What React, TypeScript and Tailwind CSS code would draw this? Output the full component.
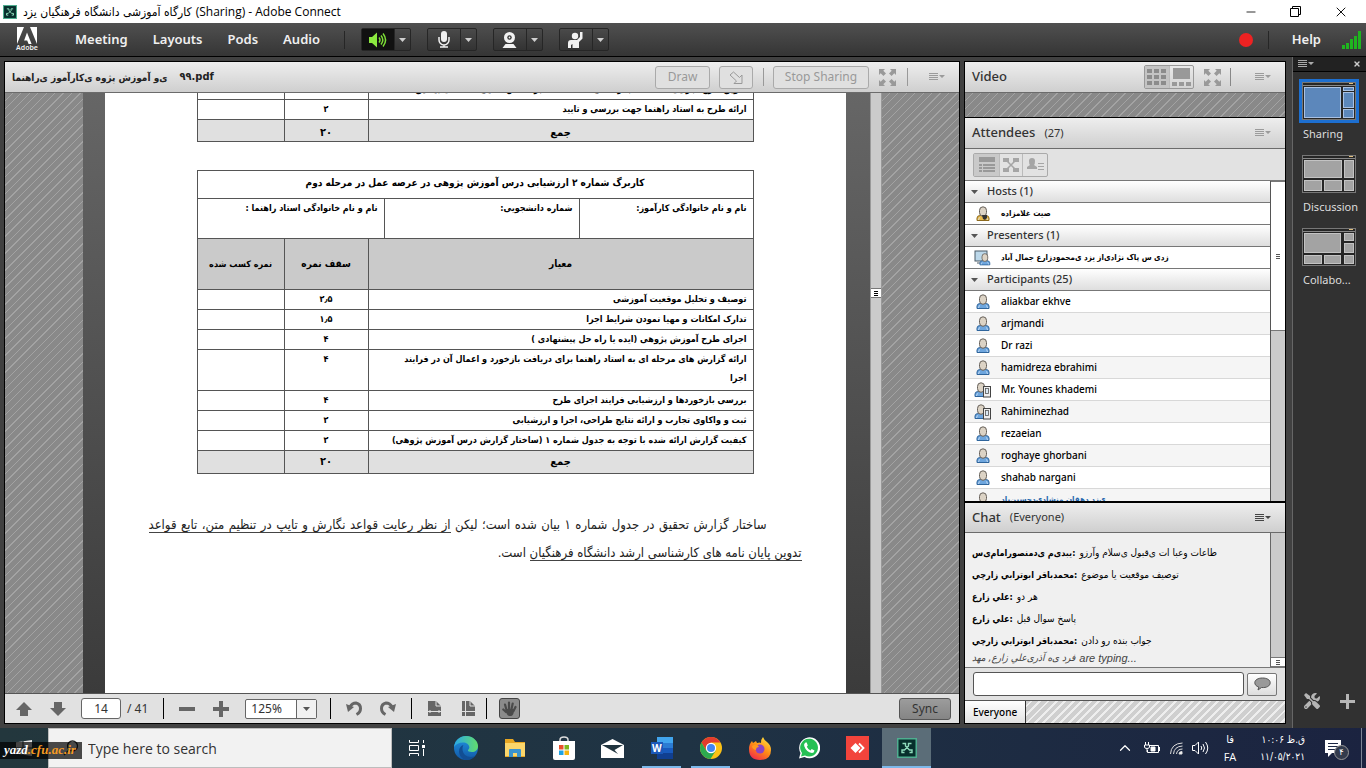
import React, { useState } from 'react';
import { ChevronUp, Minus, X } from 'lucide-react';
import { FaTools } from 'react-icons/fa';

const FA = "font-['DejaVu_Sans_Condensed','DejaVu_Sans',sans-serif]";
const HATCH = 'bg-[repeating-linear-gradient(135deg,#898989_0px,#898989_5px,#a3a3a3_5px,#a3a3a3_6px)]';
const HATCH_LIGHT = 'bg-[repeating-linear-gradient(135deg,#cfcfcf_0px,#cfcfcf_4px,#eeeeee_4px,#eeeeee_6px)]';
const POD_HEAD = 'bg-linear-to-b from-[#eeeeee] to-[#cfcfcf] border-b border-[#6b6b6b]';

const participants = [
    { name: 'aliakbar ekhve' },
    { name: 'arjmandi' },
    { name: 'Dr razi' },
    { name: 'hamidreza ebrahimi' },
    { name: 'Mr. Younes khademi', mobile: true },
    { name: 'Rahiminezhad', mobile: true },
    { name: 'rezaeian' },
    { name: 'roghaye ghorbani' },
    { name: 'shahab nargani' },
];

const messages = [
    { from: 'یبدی‌م ی‌دمنصورامام‌ی‌س', text: 'طاعات وعبا ات ی‌قبول ی‌سلام وآرزو' },
    { from: 'محمدباقر ابوترابي زارچي', text: 'توصیف موقعیت یا موضوع' },
    { from: 'علي زارع', text: 'هر دو' },
    { from: 'علي زارع', text: 'پاسخ سوال قبل' },
    { from: 'محمدباقر ابوترابي زارچي', text: 'جواب بنده رو دادن' },
];

const criteria = [
    { text: 'توصیف و تحلیل موقعیت آموزشی', score: '۲٫۵' },
    { text: 'تدارک امکانات و مهیا نمودن شرایط اجرا', score: '۱٫۵' },
    { text: 'اجرای طرح آموزش پژوهی (ایده یا راه حل پیشنهادی )', score: '۴' },
    { text: 'ارائه گزارش های مرحله ای به استاد راهنما برای دریافت بازخورد و اعمال آن در فرایند', rest: 'اجرا', score: '۴' },
    { text: 'بررسی بازخوردها و ارزشیابی فرایند اجرای طرح', score: '۴' },
    { text: 'ثبت و واکاوی تجارب و ارائه نتایج طراحی، اجرا و ارزشیابی', score: '۲' },
    { text: 'کیفیت گزارش ارائه شده با توجه به جدول شماره ۱ (ساختار گزارش درس آموزش پژوهی)', score: '۲' },
];

/* ---------- icons ---------- */

const ConnectLogo = ({ className }: { className?: string }) => (
    <svg viewBox="0 0 20 20" className={className}>
        <rect x="0.75" y="0.75" width="18.5" height="18.5" fill="#072f2c" stroke="#4fae90" strokeWidth="1.5" />
        <path d="M5.500 5.500h3v2.500l4 4h2.500v2.500h-2.500M14.500 5.500h-3v2.500l-4 4H5v2.500h2.500" fill="none" stroke="#8fdcbc" strokeWidth="1.4" />
    </svg>
);

const AdobeLogo = () => (
    <svg width="20" height="17" viewBox="0 0 20 17">
        <path fill="#fff" d="M0 0h7L0 17zM13 0h7v17zM10 5.5 14.6 17h-3l-1.4-3.6H7.1z" />
    </svg>
);

const Caret = ({ className = 'fill-[#cfcfcf]' }: { className?: string }) => (
    <svg width="7" height="4" viewBox="0 0 7 4" className={className}><path d="M0 0h7L3.500 4z" /></svg>
);

const MenuLines = ({ className = 'text-[#9b9b9b]' }: { className?: string }) => (
    <svg width="16" height="8" viewBox="0 0 16 8" className={className} fill="currentColor">
        <path d="M0 0h9v1H0zM0 2h9v1H0zM0 4h9v1H0zM0 6h9v1H0zM10 2h6l-3 3z" />
    </svg>
);

const Expand = () => (
    <svg width="17" height="17" viewBox="0 0 17 17" fill="#999">
        <path d="M0 0h6L4.300 1.700 7 4.400 4.400 7 1.700 4.300 0 6zM17 0v6l-1.700-1.700L12.600 7 10 4.400l2.700-2.700L11 0zM0 17v-6l1.700 1.700L4.400 10 7 12.600 4.300 15.300 6 17zM17 17h-6l1.700-1.700L10 12.600 12.600 10l2.700 2.700L17 11z" />
    </svg>
);

const SpeakerIcon = () => (
    <svg width="19" height="16" viewBox="0 0 19 16" fill="none" stroke="#7ddf36" strokeWidth="1.5">
        <path d="M1 5h3l5-4.500v15L4 11H1z" fill="#8be83f" stroke="none" />
        <path d="M11 5.500q2 2.500 0 5M13 3.500q3.600 4.500 0 9M15 1.500q5.200 6.500 0 13" />
    </svg>
);

const MicIcon = () => (
    <svg width="12" height="17" viewBox="0 0 12 17" fill="#f2f2f2">
        <rect x="3" y="0" width="6" height="11" rx="3" />
        <path d="M1 6v3a5 5 0 0 0 10 0V6M6 14v2M2 16h8" fill="none" stroke="#f2f2f2" strokeWidth="1.500" />
    </svg>
);

const WebcamIcon = () => (
    <svg width="15" height="16" viewBox="0 0 15 16">
        <circle cx="7.5" cy="5.500" r="5.500" fill="#f2f2f2" />
        <circle cx="7.5" cy="5.500" r="2.200" fill="#333" />
        <circle cx="7.500" cy="5.500" r="0.900" fill="#f2f2f2" />
        <path d="M3.500 12h8l3 4H.500z" fill="#f2f2f2" />
    </svg>
);

const HandRaiseIcon = () => (
    <svg width="15" height="16" viewBox="0 0 15 16" fill="#f2f2f2">
        <circle cx="7" cy="4" r="3.200" />
        <path d="M12 0h2.500v6.500L11 10v6H4.500v-4l-1.500 1v3H0v-5q0-3 3-3h6l3-3z" />
    </svg>
);

const PersonIcon = ({ kind = 'user' }: { kind?: 'user' | 'mobile' | 'host' | 'presenter' }) => {
    const shirt = kind === 'host' ? '#eabb4e' : '#6ea6de';
    const edge = kind === 'host' ? '#8d6a1e' : '#2f659c';
    return (
        <svg width="18" height="16" viewBox="0 0 18 16">
            {kind === 'presenter' && (
                <>
                    <rect x="1" y="1" width="12" height="10" fill="#bcd8ea" stroke="#4b5a66" />
                    <path d="M3 13h7" stroke="#4b5a66" />
                </>
            )}
            <g transform={kind === 'mobile' ? 'translate(-2 0)' : kind === 'presenter' ? 'translate(3.500 3) scale(.82)' : ''}>
                <path d="M3 14.500v-2.500q0-2.500 3.500-2.500h5q3.500 0 3.500 2.500v2.500z" fill={shirt} stroke={edge} />
                <path d="M4.500 14q0-2 1.500-2.500M13.500 14q0-2-1.500-2.500" fill="none" stroke="#d3e5f6" strokeWidth=".8" />
                <path d="M5.500 4.500q0-3.700 3.500-3.700t3.500 3.700v2q0 3.800-3.500 3.800T5.500 6.500z" fill="#dcd3c5" stroke="#66605a" />
                {kind === 'host' && <path d="M8 9h5v3l-2 2-2-1z" fill="#333" />}
            </g>
            {kind === 'mobile' && (
                <>
                    <rect x="9.500" y="4.500" width="7" height="10.500" fill="#eee" stroke="#444" />
                    <rect x="11.500" y="6.500" width="3" height="5" fill="#dceaf5" stroke="#555" strokeWidth=".8" />
                </>
            )}
        </svg>
    );
};

const Thumb = ({ boxes, active }: { boxes: number[][]; active?: boolean }) => (
    <svg width="60" height="44" viewBox="0 0 60 44">
        <rect x="3.500" y="3.500" width="53" height="37" fill="#262626" stroke="#777" />
        <path d="M4 6.500h52" stroke="#888" />
        <path d="M50 4.500h4" stroke="#e0c080" />
        {boxes.map(([x, y, w, h], i) => (
            <rect key={i} x={x + 0.5} y={y + 0.5} width={w - 1} height={h - 1} fill={active ? '#5c87bb' : '#a3a3a3'} stroke={active ? '#a9c1e4' : '#c3c3c3'} />
        ))}
        {active && <rect x="1.500" y="1.500" width="57" height="41" fill="none" stroke="#1d6fd0" strokeWidth="3" />}
    </svg>
);

const layouts = [
    { label: 'Sharing', active: true, boxes: [[5, 8, 37, 31], [44, 8, 11, 4], [44, 13, 11, 16], [44, 30, 11, 9]] },
    { label: 'Discussion', boxes: [[5, 8, 38, 18], [45, 8, 10, 18], [5, 28, 18, 11], [25, 28, 18, 11], [45, 28, 10, 11]] },
    { label: 'Collabo...', boxes: [[5, 8, 37, 20], [45, 8, 10, 8], [45, 18, 10, 10], [5, 30, 18, 9], [25, 30, 17, 9], [45, 30, 10, 9]] },
];

/* ---------- top bars ---------- */

const TitleBar = () => (
    <header className="flex h-[23px] shrink-0 items-center bg-white">
        <ConnectLogo className="ml-[3px] size-[14px]" />
        <h1 className={`ml-[6px] flex gap-1 text-[12px] text-black ${FA}`}>
            <bdi>کارگاه آموزشی دانشگاه فرهنگیان یزد</bdi>
            <span className="font-['Open_Sans',sans-serif]">(Sharing) - Adobe Connect</span>
        </h1>
        <div className="mr-[3px] ml-auto flex items-center text-black">
            <button aria-label="Minimize" className="flex w-[45px] justify-center"><Minus size={14} strokeWidth={1.4} /></button>
            <button aria-label="Restore" className="flex w-[45px] justify-center">
                <svg width="11" height="11" viewBox="0 0 11 11" fill="none" stroke="#000"><path d="M2.500 2.500v-2h8v8h-2M.500 2.500h8v8h-8z" /></svg>
            </button>
            <button aria-label="Close" className="flex w-[45px] justify-center"><X size={16} strokeWidth={1.4} /></button>
        </div>
    </header>
);

const SplitButton = ({ label, icon, on }: { label: string; icon: React.ReactNode; on?: boolean }) => (
    <div className="flex h-[23px] rounded-[2px] border border-[#262626] bg-linear-to-b from-[#4a4a4a] to-[#333]">
        <button aria-label={label} className={`flex w-[32px] items-center justify-center ${on ? 'bg-[#111]' : ''}`}>{icon}</button>
        <button aria-label={`${label} options`} className="flex w-4 items-center justify-center border-l border-[#262626]"><Caret /></button>
    </div>
);

const MenuBar = () => (
    <nav className="flex h-[34px] shrink-0 items-center border-b border-black bg-linear-to-b from-[#505050] to-[#353535] font-['Noto_Sans',sans-serif] text-[13px] font-semibold text-[#f0f0f0]">
        <div className="ml-[17px] flex w-5 flex-col items-center">
            <AdobeLogo />
            <span className="text-[7px] leading-[8px]">Adobe</span>
        </div>
        <div className="ml-[38px] flex gap-[25px]">
            {['Meeting', 'Layouts', 'Pods', 'Audio'].map(m => <button key={m}>{m}</button>)}
        </div>
        <div className="ml-6 h-[18px] w-px bg-[#262626]" />
        <div className="ml-4 flex gap-4">
            <SplitButton label="Speakers" icon={<SpeakerIcon />} on />
            <SplitButton label="Microphone" icon={<MicIcon />} />
            <SplitButton label="Webcam" icon={<WebcamIcon />} />
            <SplitButton label="Raise hand" icon={<HandRaiseIcon />} />
        </div>
        <div className="ml-auto flex items-center pr-[4px]">
            <span className="size-[14px] rounded-full bg-[#ee2222]" />
            <div className="ml-[15px] h-[18px] w-px bg-[#262626]" />
            <button className="ml-[23px]">Help</button>
            <svg width="20" height="18" viewBox="0 0 20 18" fill="#1fb51f" className="ml-[21px]">
                <path d="M0 14h3v4H0zM4 12h3v6H4zM8 8h3v10H8zM12 5h3v13h-3zM16 0h3v18h-3z" />
            </svg>
        </div>
    </nav>
);

/* ---------- shared document ---------- */

const line = 'border border-[#555]';

const SharedDocument = () => (
    <article dir="rtl" className={`h-full overflow-hidden bg-white px-11 text-black ${FA}`}>
        <div className="px-12">
            <table className="-mt-[14px] w-full table-fixed border-collapse text-[9px] font-bold">
                <colgroup><col /><col className="w-[84px]" /><col className="w-[87px]" /></colgroup>
                <tbody>
                    <tr className="h-5">
                        <td className={`${line} px-[6px]`}>تدوین طرح اجرایی (متناسب با راه حل انتخاب شده بر اساس تحلیل داده های پیشین)</td>
                        <td className={line} /><td className={line} />
                    </tr>
                    <tr className="h-5">
                        <td className={`${line} px-[6px]`}>ارائه طرح به استاد راهنما جهت بررسی و تایید</td>
                        <td className={`${line} text-center`}>۲</td><td className={line} />
                    </tr>
                    <tr className="h-[22px] bg-[#e0e0e0] text-[11px] leading-[16px]">
                        <td className={`${line} pt-1 text-center`}>جمع</td>
                        <td className={`${line} pt-1 text-center`}>۲۰</td><td className={line} />
                    </tr>
                </tbody>
            </table>
            <table className="mt-7 w-full table-fixed border-collapse text-[9px] font-bold leading-[18px]">
                <colgroup>
                    <col className="w-[174px]" /><col /><col className="w-4" /><col className="w-[84px]" /><col className="w-[87px]" />
                </colgroup>
                <thead>
                    <tr className="h-7">
                        <th colSpan={5} className={`${line} pb-1 text-[10px]`}>کاربرگ شماره ۲ ارزشیابی درس آموزش پژوهی در عرصه عمل در مرحله دوم</th>
                    </tr>
                    <tr className="h-10 align-top">
                        <td className={`${line} px-[6px]`}>نام و نام خانوادگی کارآموز:</td>
                        <td className={`${line} px-[6px]`}>شماره دانشجویی:</td>
                        <td colSpan={3} className={`${line} px-[6px]`}>نام و نام خانوادگی استاد راهنما :</td>
                    </tr>
                    <tr className="h-[51px] bg-[#cacaca] text-[10px]">
                        <th colSpan={3} className={line}>معیار</th>
                        <th className={line}>سقف نمره</th>
                        <th className={`${line} text-[9px]`}>نمره کسب شده</th>
                    </tr>
                </thead>
                <tbody>
                    {criteria.map(c => (
                        <tr key={c.text} className={`align-top leading-[19px] ${c.rest ? 'h-[41px]' : 'h-5'}`}>
                            <td colSpan={3} className={`${line} px-[6px]`}>{c.text}{c.rest && <><br />{c.rest}</>}</td>
                            <td className={`${line} text-center`}>{c.score}</td>
                            <td className={line} />
                        </tr>
                    ))}
                    <tr className="h-[23px] bg-[#e0e0e0] text-[11px]">
                        <td colSpan={3} className={`${line} text-center`}>جمع</td>
                        <td className={`${line} text-center`}>۲۰</td>
                        <td className={line} />
                    </tr>
                </tbody>
            </table>
        </div>
        <div className="mt-[37px] text-[13px] leading-7 text-[#222]">
            <p className="pr-[35px] [text-align-last:justify]">
                ساختار گزارش تحقیق در جدول شماره ۱ بیان شده است؛ لیکن <span className="border-b border-[#444]">از نظر رعایت قواعد نگارش و تایپ در تنظیم متن، تابع قواعد</span>
            </p>
            <p><span className="border-b border-[#444]">تدوین پایان نامه های کارشناسی ارشد دانشگاه فرهنگیان</span> است.</p>
        </div>
    </article>
);

const ToolRule = () => <div className="h-[21px] w-px bg-black" />;

const PdfToolbar = () => {
    const [page, setPage] = useState('14');
    return (
        <div className="flex h-[30px] shrink-0 items-center border-t border-[#555] bg-[#e1e1e1] font-['Noto_Sans',sans-serif] text-[12px] text-[#333]">
            <button aria-label="Previous page" className="ml-[11px]"><svg width="16" height="14" fill="#666"><path d="M8 0l8 8h-4v6H4V8H0z" /></svg></button>
            <button aria-label="Next page" className="ml-[18px]"><svg width="16" height="14" fill="#666"><path d="M8 14l8-8h-4V0H4v6H0z" /></svg></button>
            <input aria-label="Page" value={page} onChange={e => setPage(e.target.value)} className="ml-[15px] h-[21px] w-10 rounded-[3px] border border-[#666] bg-white text-center" />
            <span className="ml-[6px]">/ 41</span>
            <div className="ml-[15px] flex items-center gap-[15px]">
                <ToolRule />
                <button aria-label="Zoom out"><svg width="16" height="16" fill="#666"><path d="M0 6h16v4H0z" /></svg></button>
                <button aria-label="Zoom in" className="ml-[3px]"><svg width="16" height="16" fill="#666"><path d="M6 0h4v6h6v4h-6v6H6v-6H0V6h6z" /></svg></button>
            </div>
            <div className="relative ml-4 flex h-5 w-[72px] rounded-[2px] border border-[#666] bg-white">
                <select aria-label="Zoom" className="w-full appearance-none pl-[5px] text-[12px] leading-[18px]"><option>125%</option></select>
                <span className="pointer-events-none absolute inset-y-0 right-0 flex w-5 items-center justify-center border-l border-[#666] bg-[#f1f1f1]"><Caret className="fill-[#555]" /></span>
            </div>
            <div className="ml-[13px] flex items-center gap-[15px]">
                <ToolRule />
                <button aria-label="Rotate left"><svg width="16" height="15" viewBox="0 0 16 15"><path d="M4 6q2-4 6-4 4.500 1 4.500 5.500 0 4-4 6" fill="none" stroke="#666" strokeWidth="3" /><path d="M0 3l2 8 6-5z" fill="#666" /></svg></button>
                <button aria-label="Rotate right" className="ml-[3px]"><svg width="16" height="15" viewBox="0 0 16 15"><path d="M12 6q-2-4-6-4-4.500 1-4.500 5.500 0 4 4 6" fill="none" stroke="#666" strokeWidth="3" /><path d="M16 3l-2 8-6-5z" fill="#666" /></svg></button>
            </div>
            <div className="ml-[15px] flex items-center">
                <ToolRule />
                <button aria-label="Fit width" className="ml-4"><svg width="13" height="15" viewBox="0 0 13 15"><path d="M0 0h8l5 5v10H0z" fill="#666" /><path d="M8 0v5h5M0 10.500h13M2 9v3M11 9v3" stroke="#e1e1e1" fill="none" /></svg></button>
                <button aria-label="Fit page" className="mr-[11px] ml-[21px]"><svg width="13" height="15" viewBox="0 0 13 15"><path d="M0 0h8l5 5v10H0z" fill="#666" /><path d="M8 0v5h5M0 10.500h13M3.500 0v15" stroke="#e1e1e1" fill="none" /></svg></button>
                <ToolRule />
            </div>
            <button aria-label="Pan" className="ml-[12px] flex h-[21px] w-[21px] items-center justify-center rounded-[3px] border border-[#444] bg-[#8b8b8b]">
                <svg width="15" height="16" viewBox="0 0 15 16" fill="none" stroke="#4a4a4a" strokeWidth="2.200" strokeLinecap="round">
                    <path d="M4.500 9 3 3.500M7 8V1.500M9.500 8l1.200-5.500M11.500 10l2-4M4 11 1.300 8.500" /><path d="M4 8h8q0 7-3 7H7q-3-1-3-7z" fill="#4a4a4a" stroke="none" />
                </svg>
            </button>
            <button className="ml-auto mr-2 h-[22px] w-[52px] rounded-[3px] border border-[#555] bg-linear-to-b from-[#9c9c9c] to-[#858585] text-[#333]">Sync</button>
        </div>
    );
};

const ghost = 'flex h-[23px] items-center justify-center rounded-[3px] border border-[#aaa] bg-[#e0e0e0] text-[#999]';

const SharePod = () => (
    <section className="flex min-w-0 flex-1 flex-col border border-black">
        <div className={`flex h-[31px] shrink-0 items-center font-['Noto_Sans',sans-serif] text-[12px] ${POD_HEAD}`}>
            <h2 className={`ml-[7px] flex items-center gap-3 text-[10px] font-semibold text-[#222] ${FA}`}>
                <bdi>ی‌و آموزش پژوه ی‌کارآموز ی‌راهنما</bdi>
                <span className="text-[11px]">۹۹.pdf</span>
            </h2>
            <div className="ml-auto flex items-center">
                <button className={`${ghost} w-[55px]`}>Draw</button>
                <button aria-label="Pointer" className={`${ghost} ml-[9px] w-[34px]`}>
                    <svg width="14" height="13" viewBox="0 0 14 13" fill="none" stroke="#999"><path d="M1 4 4.500 1l6 5.500L13 4v8.500H5L7.500 10z" /></svg>
                </button>
                <div className="ml-[10px] h-[18px] w-px bg-[#999]" />
                <button className={`${ghost} ml-[9px] w-[96px]`}>Stop Sharing</button>
                <button aria-label="Full screen" className="ml-[10px]"><Expand /></button>
                <div className="ml-[11px] h-[18px] w-px bg-[#999]" />
                <button aria-label="Pod options" className="ml-[21px] mr-[14px]"><MenuLines /></button>
            </div>
        </div>
        <div className="flex min-h-0 flex-1">
            <div className={`flex-1 ${HATCH}`} />
            <div className="w-[787px] shrink-0 bg-linear-to-b from-[#666] to-[#3b3b3b] pl-[22px] pr-6">
                <SharedDocument />
            </div>
            <div className="flex w-3 shrink-0 flex-col border-x border-[#999] bg-[#cbcbcb] pt-[195px]">
                <div className="flex h-[10px] flex-col items-center justify-center gap-px border-y border-[#777] bg-white">
                    <i className="h-px w-1 bg-black" /><i className="h-px w-1 bg-black" /><i className="h-px w-1 bg-black" />
                </div>
            </div>
            <div className={`flex-1 ${HATCH}`} />
        </div>
        <PdfToolbar />
    </section>
);

/* ---------- right hand pods ---------- */

const GroupHead = ({ label }: { label: string }) => (
    <h3 className="flex h-[22px] items-center border-b border-[#777] bg-linear-to-b from-white to-[#dedede] pl-[6px] text-[11px] text-[#333]">
        <Caret className="fill-[#555]" />
        <span className="ml-[9px]">{label}</span>
    </h3>
);

const segment = 'flex h-[22px] items-center justify-center';

const AttendeePod = () => (
    <section className="flex min-h-0 flex-1 flex-col border-t border-black">
        <div className={`flex h-[31px] shrink-0 items-center pl-[7px] pr-[14px] ${POD_HEAD}`}>
            <h2 className="text-[13px] font-medium text-[#333]">Attendees</h2>
            <span className="ml-[9px] text-[11px] text-[#333]">(27)</span>
            <button aria-label="Attendee options" className="ml-auto"><MenuLines /></button>
        </div>
        <div className="flex h-8 shrink-0 items-center border-b border-[#777] bg-[#e2e2e2] pl-2">
            <div className="flex rounded-[2px] border border-[#aaa]">
                <button aria-label="List view" className={`${segment} w-[25px] bg-[#c9c9c9]`}><svg width="16" height="15" fill="#999"><path d="M0 0h16v5H0zM0 7h3v2H0zM4 7h12v2H4zM0 10h3v2H0zM4 10h12v2H4zM0 13h3v2H0zM4 13h12v2H4z" /></svg></button>
                <button aria-label="Breakout view" className={`${segment} w-6 border-x border-[#bbb]`}><svg width="16" height="14" fill="#a5a5a5"><path d="M0 0h6v4H0zM10 0h6v4h-6zM0 10h6v4H0zM10 10h6v4h-6z" /><path d="m4 3 8 8M12 3l-8 8" stroke="#a5a5a5" strokeWidth="1.500" /></svg></button>
                <button aria-label="Status view" className={`${segment} w-6`}><svg width="17" height="14" fill="#a5a5a5"><path d="M2 3q0-3 3-3t3 3-1 4l3 2v2H0V9l3-2q-1-1-1-4zM11 5h6v1h-6zM11 8h6v1h-6zM11 11h6v1h-6z" /></svg></button>
            </div>
        </div>
        <div className="flex min-h-0 flex-1 bg-white">
            <div className="min-w-0 flex-1 overflow-hidden text-[10px] font-medium text-black">
                <GroupHead label="Hosts (1)" />
                <div className="flex h-[22px] items-center gap-[9px] border-b border-[#777] pl-[9px]">
                    <PersonIcon kind="host" /><bdi className={`text-[8px] font-bold ${FA}`}>صیت غلامزاده</bdi>
                </div>
                <GroupHead label="Presenters (1)" />
                <div className="flex h-[22px] items-center gap-[9px] border-b border-[#777] pl-[9px]">
                    <PersonIcon kind="presenter" /><bdi className={`text-[8px] font-bold ${FA}`}>زدی س پاک نژادی‌از یزد ی‌محمودزارع جمال آباد</bdi>
                </div>
                <GroupHead label="Participants (25)" />
                <ul>
                    {participants.map(p => (
                        <li key={p.name} className="flex h-[22px] items-center gap-[9px] border-b border-[#d8d8d8] pl-[9px] even:bg-[#f5f5f5]">
                            <PersonIcon kind={p.mobile ? 'mobile' : 'user'} />{p.name}
                        </li>
                    ))}
                    <li className="flex h-[22px] items-center gap-[9px] bg-[#f5f5f5] pl-[9px]">
                        <PersonIcon /><bdi className={`text-[8px] font-bold text-[#1f66ad] ${FA}`}>ی‌زد دهقان منشادی‌دحسین‌یاد</bdi>
                    </li>
                </ul>
            </div>
            <div className="flex w-[15px] flex-col border-l border-[#555] bg-[#cbcbcb]">
                <div className="flex h-[150px] flex-col items-center justify-center gap-px border-y border-[#777] bg-white">
                    <i className="h-px w-1 bg-[#555]" /><i className="h-px w-1 bg-[#555]" /><i className="h-px w-1 bg-[#555]" />
                </div>
            </div>
        </div>
    </section>
);

const ChatPod = () => {
    const [draft, setDraft] = useState('');
    return (
        <section className="flex h-[222px] shrink-0 flex-col border-t-2 border-black">
            <div className={`flex h-[30px] shrink-0 items-center pl-[7px] pr-[14px] ${POD_HEAD}`}>
                <h2 className="text-[13px] font-medium text-[#333]">Chat</h2>
                <span className="ml-[9px] text-[11px] text-[#333]">(Everyone)</span>
                <button aria-label="Chat options" className="ml-auto"><MenuLines className="text-[#444]" /></button>
            </div>
            <div className="flex min-h-0 flex-1 border-b border-[#777] bg-[#f0f0f0]">
                <div className={`flex min-w-0 flex-1 flex-col justify-end overflow-hidden pb-[3px] pl-[7px] text-[10px] text-black ${FA}`}>
                    {messages.map((m, i) => (
                        <p key={i} className="flex h-[22px] shrink-0 items-baseline gap-1 whitespace-nowrap leading-[22px]">
                            <b className="text-[9px]"><bdi>{m.from}</bdi>:</b><bdi>{m.text}</bdi>
                        </p>
                    ))}
                    <p className="flex gap-1 text-[10px] italic leading-[12px] text-[#444]">
                        <bdi>فرد ی‌ه آذری‌علي زارع, مهد</bdi>
                        <span className="font-['Liberation_Sans',sans-serif] text-[11px]">are typing...</span>
                    </p>
                </div>
                <div className="flex w-[15px] flex-col justify-end border-l border-[#666] bg-[#cbcbcb]">
                    <div className="flex h-[10px] flex-col items-center justify-center gap-px border-y border-[#777] bg-white">
                        <i className="h-px w-1 bg-[#555]" /><i className="h-px w-1 bg-[#555]" /><i className="h-px w-1 bg-[#555]" />
                    </div>
                </div>
            </div>
            <div className="flex h-8 shrink-0 items-center gap-[3px] bg-[#e2e2e2] px-2">
                <input aria-label="Message" value={draft} onChange={e => setDraft(e.target.value)} className="h-6 min-w-0 flex-1 rounded-[3px] border border-[#555] bg-white px-2 text-[12px]" />
                <button aria-label="Send" className="flex h-[23px] w-[30px] items-center justify-center rounded-[2px] border border-[#777] bg-linear-to-b from-white to-[#ddd]">
                    <svg width="17" height="14" viewBox="0 0 17 14"><path d="M8.500 1C4 1 .800 3 .800 5.700c0 2 1.500 3.600 4 4.300L4 13l3.500-2.500C12.500 11 16.200 9 16.200 5.700 16.200 3 13 1 8.500 1z" fill="#999" stroke="#555" /></svg>
                </button>
            </div>
            <div className={`flex h-[23px] shrink-0 border-t border-[#555] ${HATCH_LIGHT}`}>
                <button className="border-r border-[#333] bg-linear-to-b from-white to-[#e2e2e2] px-2 text-[10px] font-medium text-black">Everyone</button>
            </div>
        </section>
    );
};

const SidePods = () => (
    <aside className="flex w-[322px] shrink-0 flex-col border border-black font-['Noto_Sans',sans-serif]">
        <div className={`flex h-[31px] shrink-0 items-center pl-[7px] pr-[14px] ${POD_HEAD}`}>
            <h2 className="text-[13px] font-medium text-[#333]">Video</h2>
            <div className="ml-auto flex rounded-[2px] border border-[#999]">
                <button aria-label="Grid view" className={`${segment} w-6 bg-[#c4c4c4]`}><svg width="20" height="16" fill="#8c8c8c"><path d="M0 0h5v4H0zM7 0h5v4H7zM14 0h5v4h-5zM0 6h5v4H0zM7 6h5v4H7zM14 6h5v4h-5zM0 12h5v4H0zM7 12h5v4H7zM14 12h5v4h-5z" /></svg></button>
                <button aria-label="Filmstrip view" className={`${segment} w-6 border-l border-[#bbb]`}><svg width="20" height="18" fill="#999"><path d="M1 0h17v11H1zM0 14h5v4H0zM7 14h5v4H7zM14 14h5v4h-5z" /></svg></button>
            </div>
            <button aria-label="Full screen" className="ml-[10px]"><Expand /></button>
            <div className="ml-[9px] h-[18px] w-px bg-[#888]" />
            <button aria-label="Video options" className="ml-6"><MenuLines /></button>
        </div>
        <div className={`h-6 shrink-0 ${HATCH}`} />
        <AttendeePod />
        <ChatPod />
    </aside>
);

const LayoutBar = () => (
    <aside className="-my-1 ml-[2px] flex w-[74px] shrink-0 flex-col border-l border-[#666] bg-[#313131] font-['Noto_Sans',sans-serif]">
        <div className="flex h-[15px] items-center justify-between border-b border-black bg-[#222] px-[5px]">
            <button aria-label="Layout options"><MenuLines className="text-[#aaa]" /></button>
            <button aria-label="Close layouts"><X size={8} strokeWidth={4} color="#ccc" /></button>
        </div>
        <div className="flex flex-col gap-[7px] pt-[7px]">
            {layouts.map(l => (
                <button key={l.label} className="flex flex-col pl-[6px] text-left text-[11px] leading-[22px] text-[#ddd]">
                    <Thumb boxes={l.boxes} active={l.active} />
                    <span className="pl-1">{l.label}</span>
                </button>
            ))}
        </div>
        <div className="mt-auto flex items-center justify-between px-[11px] pb-[19px]">
            <button aria-label="Tools"><FaTools size={16} color="#b5b5b5" /></button>
            <button aria-label="Add layout"><svg width="15" height="15" fill="#b5b5b5"><path d="M6 0h3v6h6v3H9v6H6V9H0V6h6z" /></svg></button>
        </div>
    </aside>
);

/* ---------- taskbar ---------- */

const apps = [
    { name: 'Task View', icon: <svg width="18" height="16" viewBox="0 0 18 16" fill="none" stroke="#fff"><path d="M1.500 0v2.500h9V0M1.500 5.500h9v5h-9zM1.500 16v-2.500h9V16M15.500 0v3M15.500 9v7" /><path d="M14 5h3v3h-3z" fill="#fff" stroke="none" /></svg> },
    {
        name: 'Edge', icon: (
            <svg width="24" height="24" viewBox="0 0 24 24">
                <defs>
                    <linearGradient id="e1" x1="0" x2="1"><stop stopColor="#2aa9e8" /><stop offset="1" stopColor="#62dc6c" /></linearGradient>
                    <linearGradient id="e2" x1="0" y1="0" x2="0" y2="1"><stop stopColor="#2196e3" /><stop offset="1" stopColor="#1257a5" /></linearGradient>
                </defs>
                <circle cx="12" cy="12" r="12" fill="url(#e2)" />
                <path d="M0 11C1 4 6 0 12 0c7 0 12 5 12 10 0 4-3 6-6 6s-4.500-1-4-2c1-1 1.500-2 1.300-3C15 8.500 12.500 6.500 9 6.500 5 6.500 2 8 0 11z" fill="url(#e1)" />
                <path d="M8.500 13c0 5 4 8 8.500 8 2 0 4-1 5-2-2 3-6 5-10 5C7.500 23 5 19 5 15.500 5 12 7 9.500 9.500 9 8.800 10 8.500 11.500 8.500 13z" fill="#124e94" />
            </svg>
        ),
    },
    { name: 'File Explorer', icon: <svg width="22" height="20" viewBox="0 0 22 20"><path d="M1 1h8l2 3h10v15H1z" fill="#e8a722" /><path d="M1 5h20v13H1z" fill="#fbd66b" /><path d="M5 19v-7q0-1 1-1h10q1 0 1 1v7h-4v-4H9v4z" fill="#3a93cf" /></svg> },
    { name: 'Store', icon: <svg width="22" height="24" viewBox="0 0 22 24"><path d="M7 7V4q0-3 4-3t4 3v3" fill="none" stroke="#ddd" strokeWidth="1.500" /><path d="M0 5h22v17q0 2-2 2H2q-2 0-2-2z" fill="#fff" /><path d="M6 9h4.500v4.500H6z" fill="#e8502c" /><path d="M11.500 9H16v4.500h-4.500z" fill="#7db71e" /><path d="M6 14.500h4.500V19H6z" fill="#1fa3e3" /><path d="M11.500 14.500H16V19h-4.500z" fill="#f7b50e" /></svg> },
    { name: 'Mail', icon: <svg width="23" height="19" viewBox="0 0 23 19"><path d="M0 6 11.500 0 23 6v13H0z" fill="#fff" /><path d="M1 6h21l-8.500 5L17 15 1 6z" fill="#20343f" /></svg> },
    { name: 'Word', underline: true, icon: <svg width="22" height="22" viewBox="0 0 22 22"><path d="M6 0h16v6H6z" fill="#41a5ee" /><path d="M6 6h16v5H6z" fill="#2b7cd3" /><path d="M6 11h16v5H6z" fill="#185abd" /><path d="M6 16h16v6H6z" fill="#103f91" /><path d="M0 5h12v12H0z" fill="#1b58b8" /><text x="1" y="15" fill="#fff" fontSize="10" fontWeight="bold" fontFamily="Open Sans">W</text></svg> },
    { name: 'Chrome', underline: true, icon: <svg width="22" height="22" viewBox="0 0 22 22"><circle cx="11" cy="11" r="11" fill="#fbc116" /><path d="M1.500 5.500A11 11 0 0 1 20.500 5.500H11L6.500 14z" fill="#e33b2e" /><path d="M1.500 5.500A11 11 0 0 0 10.500 22L15.800 13.500H6.200z" fill="#2da94f" /><circle cx="11" cy="11" r="5.200" fill="#fff" /><circle cx="11" cy="11" r="4" fill="#4285f4" /></svg> },
    {
        name: 'Firefox', icon: (
            <svg width="22" height="23" viewBox="0 0 22 23">
                <defs><linearGradient id="f1" x1=".8" y1="0" x2=".2" y2="1"><stop stopColor="#ffe23e" /><stop offset=".5" stopColor="#ff8a16" /><stop offset="1" stopColor="#f0264e" /></linearGradient></defs>
                <path d="M14 0q1 3 4 5 4 3 4 8 0 10-11 10T0 12Q0 7 3 4l1 2 3-2 1 2q3-1 4 0 0-4 2-6z" fill="url(#f1)" />
                <circle cx="11" cy="12" r="4.500" fill="#8c44c4" />
                <path d="M3 9q5-3 7 1-3 0-3 3-4-1-4-4z" fill="#ff9a1f" />
            </svg>
        ),
    },
    { name: 'WhatsApp', icon: <svg width="22" height="22" viewBox="0 0 22 22"><path d="M1 21.500 2.500 16A10.500 10.500 0 1 1 6.500 20z" fill="#fff" /><path d="M3 19.500 4 16A8.900 8.900 0 1 1 7 18.500z" fill="#25c054" /><path d="M7.500 5.500q-2 1-1.300 3.500 2 6 7.800 7 2 0 2.500-2.500l-2.800-1.500-1.200 1.400Q10 12.500 8.800 9.800l1-1.300L8.700 5.600z" fill="#fff" /></svg> },
    { name: 'AnyDesk', icon: <svg width="23" height="24" viewBox="0 0 23 24"><path d="M0 0h23v24H0z" fill="#f2443c" /><path d="m9.500 7 5 5-5 5-5-5z" fill="#fff" /><path d="m13 7.500 4.500 4.500L13 16.500" fill="none" stroke="#fff" strokeWidth="1.800" /></svg> },
    { name: 'Adobe Connect', underline: true, active: true, icon: <ConnectLogo className="size-5" /> },
];

const Taskbar = () => (
    <footer className="relative flex h-10 shrink-0 bg-linear-to-r from-[#23373d] via-[#1f3344] to-[#1b2340] font-['Open_Sans',sans-serif] text-white">
        <button aria-label="Start" className="flex w-12 items-center justify-center">
            <svg width="16" height="16" viewBox="0 0 16 16" fill="#e8e8e8"><path d="M0 2.300 6.500 1.400v6.100H0zM7.500 1.200 16 0v7.500H7.500zM0 8.500h6.500v6.100L0 13.700zM7.500 8.500H16V16l-8.500-1.200z" /></svg>
        </button>
        <label className="flex w-[344px] items-center border border-[#bdbdbd] bg-[#f2f2f2] pl-[14px] text-[14px] text-[#333]">
            <svg width="16" height="16" viewBox="0 0 16 16" fill="none" stroke="#222" strokeWidth="1.300"><circle cx="9.500" cy="6" r="5" /><path d="m6 10-5 5" /></svg>
            <input aria-label="Search" placeholder="Type here to search" className="ml-[9px] min-w-0 flex-1 bg-transparent placeholder:text-[#333]" />
        </label>
        {apps.map(a => (
            <button key={a.name} aria-label={a.name} className={`relative flex w-[49px] items-center justify-center ${a.active ? 'bg-[#5b6d78]' : ''}`}>
                {a.icon}
                {a.underline && <span className={`absolute bottom-0 h-[2px] bg-[#7cb8ea] ${a.active ? 'inset-x-0' : 'inset-x-[5px]'}`} />}
            </button>
        ))}
        <div className="ml-auto flex items-center pr-1">
            <ChevronUp size={18} strokeWidth={1.600} />
            <svg width="16" height="12" viewBox="0 0 16 12" fill="none" stroke="#fff" className="ml-[10px]"><path d="M5 3.500h9.500v7H3.500V8M15.500 5v4M1.500 0v3M4.500 0v3M.500 3h5v2q0 1.500-2.500 1.500T.500 5zM3 6.500V10" /><path d="M7 5h4v4H7z" fill="#fff" /></svg>
            <svg width="13" height="13" viewBox="0 0 13 13" fill="none" stroke="#ddd" className="ml-[10px]"><path d="M.500 12Q1 1.500 12.500 1M3.500 12Q4 4.500 12.500 4M6.500 12q.5-4.800 6-5" /><path d="M9 12q0-2.500 3-2.500V12z" fill="#fff" /></svg>
            <svg width="17" height="14" viewBox="0 0 17 14" fill="none" stroke="#fff" className="ml-[9px]"><path d="M.500 4.500H3l3.500-3.500v12L3 9.500H.500zM9 5q1.500 2 0 4M11 3q3 4 0 8M13.500 1q4.500 6 0 12" /></svg>
            <div className="ml-[14px] flex w-[14px] flex-col items-center text-[11px] leading-[17px]"><bdi className={FA}>فا</bdi><span>FA</span></div>
            <div className={`ml-[18px] flex w-[50px] flex-col items-end whitespace-nowrap text-[10px] leading-[17px] ${FA}`}><bdi>ق.ظ ۱۰:۰۶</bdi><span>۱۱/۰۵/۲۰۲۱</span></div>
            <button aria-label="Notifications" className="relative ml-5 h-6 w-6">
                <svg width="16" height="17" viewBox="0 0 16 17"><path d="M0 0h16v13H7l-4 4v-4H0z" fill="#fff" /><path d="M3 3.500h10M3 6.500h10M3 9.500h7" stroke="#1c2745" /></svg>
                <span className={`absolute right-0 bottom-0 flex size-[15px] items-center justify-center rounded-full border border-[#999] bg-[#333b4d] text-[9px] ${FA}`}>۴</span>
            </button>
            <div className="ml-3 h-10 w-px bg-[#7d8596]" />
        </div>
        <div className="absolute top-[14px] left-0 h-[17px] w-[82px] bg-black/70 pl-1 font-['Liberation_Serif',serif] text-[13px] leading-[16px] font-bold italic">
            yazd<span className="text-[#f59a23]">.cfu.ac.ir</span>
        </div>
    </footer>
);

const App: React.FC = () => (
    <div className="flex h-screen flex-col overflow-hidden bg-[#414141]">
        <TitleBar />
        <MenuBar />
        <main className="flex min-h-0 flex-1 gap-1 py-1 pl-1">
            <SharePod />
            <SidePods />
            <LayoutBar />
        </main>
        <Taskbar />
    </div>
);

export default App;
